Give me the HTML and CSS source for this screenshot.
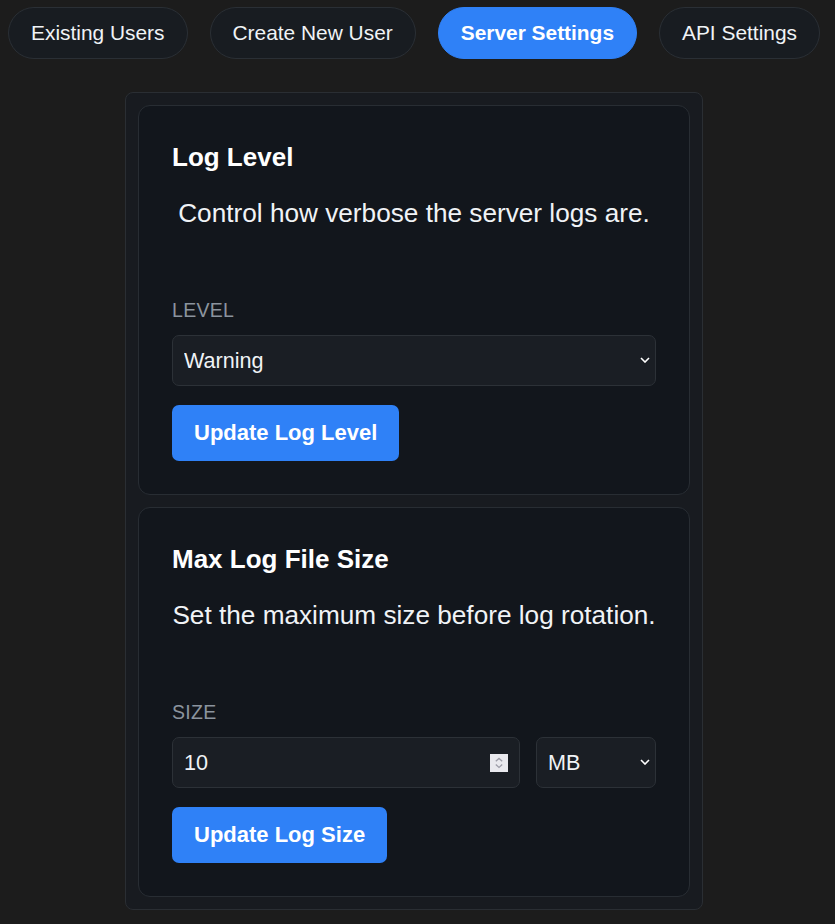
FILE: index.html
```html
<!DOCTYPE html>
<html lang="en">
<head>
<meta charset="utf-8">
<title>Server Settings</title>
<link rel="stylesheet" href="styles.css">
</head>
<body>
<nav class="tabs">
  <button class="tab">Existing Users</button>
  <button class="tab">Create New User</button>
  <button class="tab tab-active">Server Settings</button>
  <button class="tab">API Settings</button>
</nav>
<main class="panel">
  <section class="card">
    <h3 class="card-title">Log Level</h3>
    <p class="card-desc">Control how verbose the server logs are.</p>
    <div class="field">
      <label class="field-label" for="level">LEVEL</label>
      <span class="select-wrap">
        <select id="level" class="control select">
          <option>Debug</option>
          <option>Info</option>
          <option selected>Warning</option>
          <option>Error</option>
        </select>
        <svg class="chevron" width="10" height="6" viewBox="0 0 10 6" aria-hidden="true">
          <polyline points="1,1 5,5 9,1" fill="none" stroke="#ffffff" stroke-width="1.6"/>
        </svg>
      </span>
    </div>
    <button class="primary">Update Log Level</button>
  </section>
  <section class="card">
    <h3 class="card-title">Max Log File Size</h3>
    <p class="card-desc">Set the maximum size before log rotation.</p>
    <div class="field">
      <label class="field-label" for="size">SIZE</label>
      <div class="size-row">
        <span class="number-wrap">
          <input id="size" class="control number" type="number" value="10">
          <span class="spinner" aria-hidden="true">
            <svg width="18" height="18" viewBox="0 0 18 18">
              <rect width="18" height="18" fill="#e9e9ee"/>
              <polyline points="5.8,7.2 9,4.4 12.2,7.2" fill="none" stroke="#9d9da8" stroke-width="1.3"/>
              <polyline points="5.8,10.6 9,13.4 12.2,10.6" fill="none" stroke="#9d9da8" stroke-width="1.3"/>
            </svg>
          </span>
        </span>
        <span class="select-wrap unit">
          <select class="control select">
            <option>KB</option>
            <option selected>MB</option>
            <option>GB</option>
          </select>
          <svg class="chevron" width="10" height="6" viewBox="0 0 10 6" aria-hidden="true">
            <polyline points="1,1 5,5 9,1" fill="none" stroke="#ffffff" stroke-width="1.6"/>
          </svg>
        </span>
      </div>
    </div>
    <button class="primary">Update Log Size</button>
  </section>
</main>
</body>
</html>
```

FILE: styles.css
```css
html, body {
  background: #1c1c1c;
}
body {
  margin: 7px 8px 8px;
  font-family: "Liberation Sans", Arial, sans-serif;
  color: #e6edf3;
}
.tabs {
  display: flex;
  gap: 22px;
}
.tab {
  font-family: "Liberation Sans", Arial, sans-serif;
  font-size: 20.9px;
  line-height: 24px;
  padding: 13px 22px;
  border: 1px solid #2a2f35;
  border-radius: 26px;
  background: #181c21;
  color: #f0f3f6;
  cursor: pointer;
}
.tab-active {
  background: #2f81f7;
  border-color: #2f81f7;
  color: #ffffff;
  font-weight: bold;
}
.panel {
  width: 578px;
  box-sizing: border-box;
  margin: 33px 0 0 117px;
  padding: 12px;
  background: #181b20;
  border: 1px solid #2a2e33;
  border-radius: 8px;
  display: flex;
  flex-direction: column;
  gap: 12px;
}
.card {
  background: #12161c;
  border: 1px solid #282d33;
  border-radius: 12px;
  padding: 32px 33px 33px;
}
.card-title {
  margin: 4px 0 0;
  font-size: 26px;
  line-height: 30px;
  font-weight: bold;
  color: #ffffff;
}
.card-desc {
  margin: 26px 0 0;
  font-size: 26.2px;
  line-height: 30px;
  text-align: center;
  color: #f0f3f6;
}
.field {
  margin-top: 71px;
  display: flex;
  flex-direction: column;
  gap: 14px;
}
.field-label {
  font-size: 19.5px;
  line-height: 22px;
  letter-spacing: 0.3px;
  color: #8b949e;
}
.control {
  box-sizing: border-box;
  height: 51px;
  font-family: "Liberation Sans", Arial, sans-serif;
  font-size: 21.6px;
  color: #f0f3f6;
  background: #1a1e24;
  border: 1px solid #2c3137;
  border-radius: 7px;
  padding: 0 11px;
  outline: none;
}
.select-wrap {
  position: relative;
  display: flex;
}
.select {
  -webkit-appearance: none;
  appearance: none;
  width: 100%;
  padding: 0 24px 0 11px;
  cursor: pointer;
}
.chevron {
  position: absolute;
  right: 6px;
  top: 22px;
  pointer-events: none;
}
.size-row {
  display: flex;
  gap: 16px;
}
.number-wrap {
  position: relative;
  flex: 1;
  display: flex;
  min-width: 0;
}
.number {
  flex: 1;
  min-width: 0;
  width: 100%;
  -moz-appearance: textfield;
}
.number::-webkit-inner-spin-button,
.number::-webkit-outer-spin-button {
  -webkit-appearance: none;
  margin: 0;
}
.spinner {
  position: absolute;
  right: 12px;
  top: 17px;
  width: 18px;
  height: 18px;
  display: block;
  pointer-events: none;
}
.spinner svg {
  display: block;
}
.unit {
  width: 120px;
  flex: none;
}
.primary {
  align-self: flex-start;
  margin-top: 19px;
  height: 56px;
  padding: 0 22px;
  font-family: "Liberation Sans", Arial, sans-serif;
  font-size: 22px;
  font-weight: bold;
  color: #ffffff;
  background: #2f81f7;
  border: none;
  border-radius: 7px;
  cursor: pointer;
}
```
